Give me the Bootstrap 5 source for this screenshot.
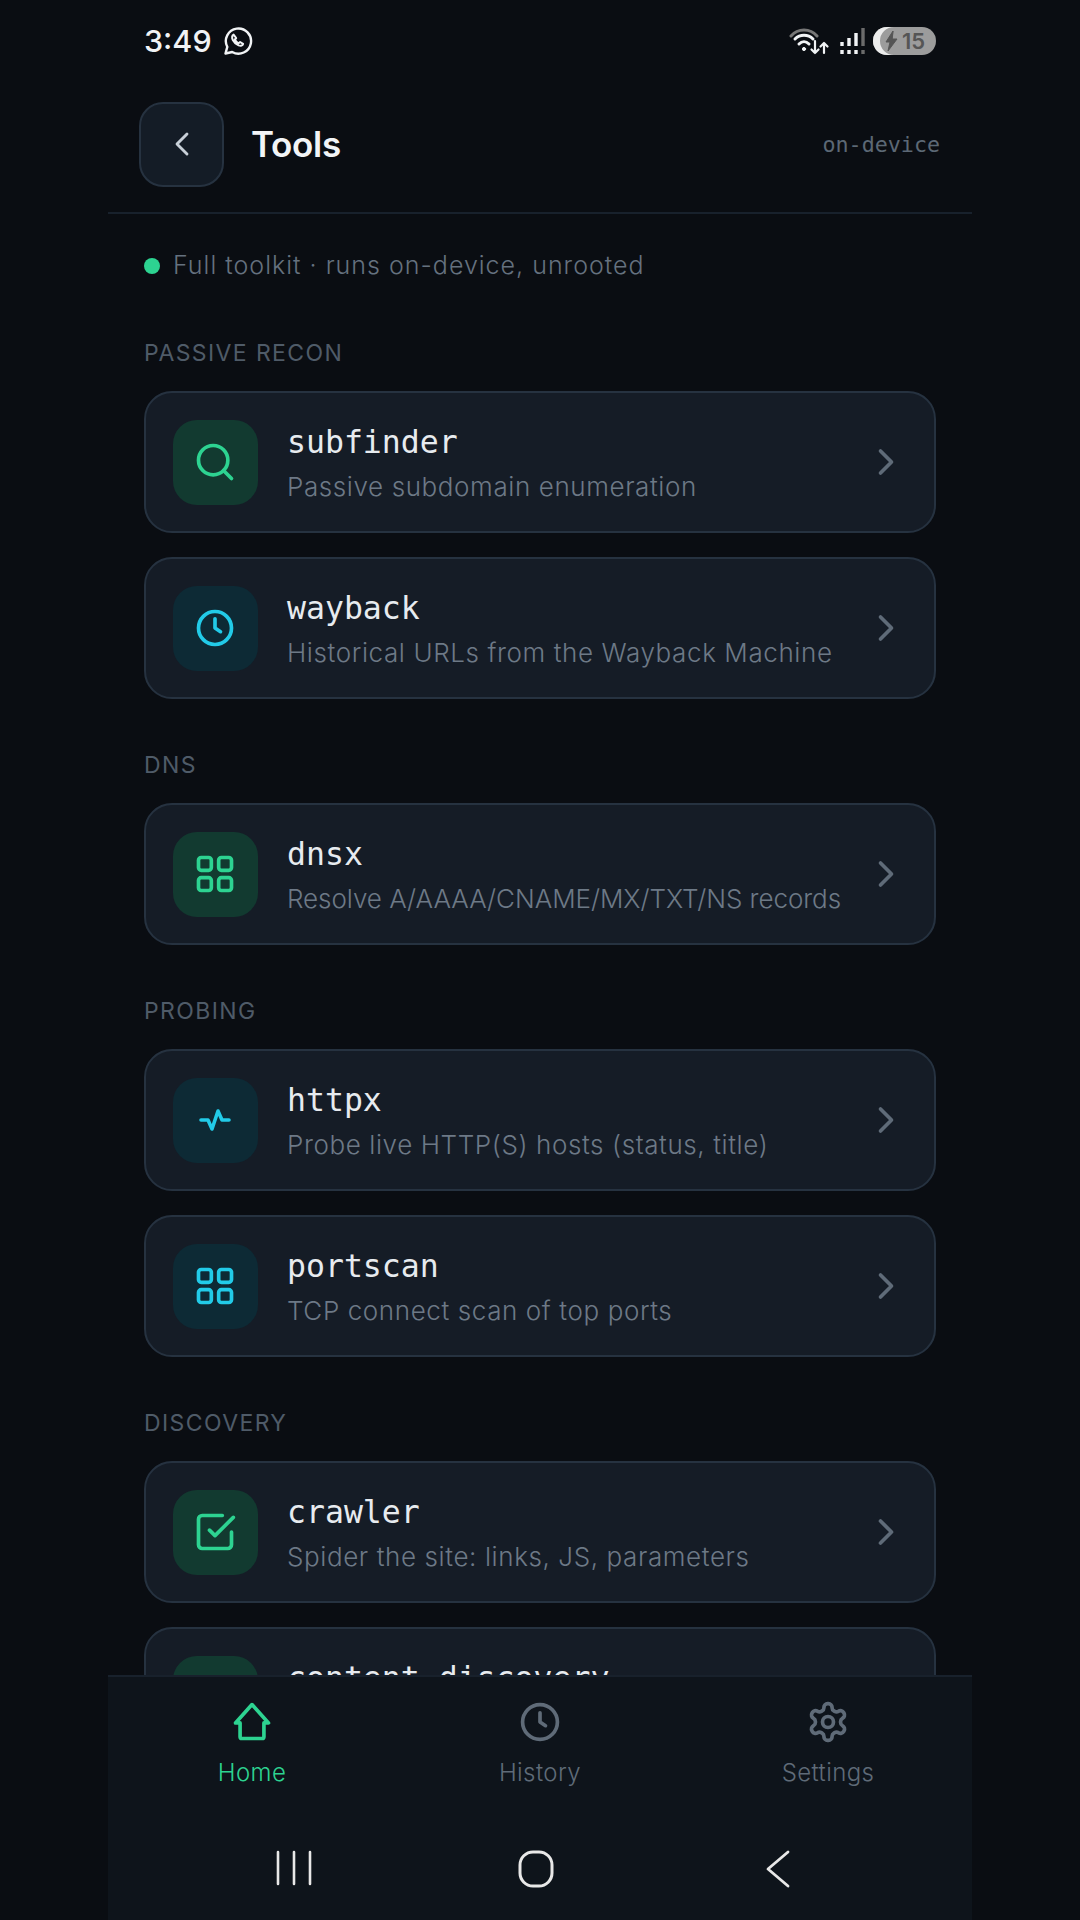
<!DOCTYPE html>
<html>

<head>
  <link href="https://cdn.jsdelivr.net/npm/bootstrap@5.3.2/dist/css/bootstrap.min.css" rel="stylesheet" type="text/css" />
  <script src="https://cdn.jsdelivr.net/npm/bootstrap@5.3.2/dist/js/bootstrap.bundle.min.js"></script>

  <style>
    html, body { height: 100%; }
    body { background: #0a0d12; font-family: "Inter", "Liberation Sans", sans-serif; overflow: hidden; }
    svg { display: block; fill: none; stroke: currentColor; stroke-linecap: round; stroke-linejoin: round; flex-shrink: 0; }

    .app-shell { width: 864px; height: 1920px; margin-left: 108px; }

    .status-row { height: 82px; padding: 0 36px; color: #f1f3f5; }
    .status-time { font-size: 30.5px; font-weight: 500; line-height: 1; width: 63px; }
    .batt-pill { width: 63px; height: 28px; border-radius: 14px; background: #9c9c9c; box-shadow: inset 7px 0 0 #ececec; color: #555; font-size: 22px; font-weight: 600; line-height: 1; padding-left: 12px; }

    .app-bar { height: 132px; padding: 20px 32px 26px 31px; border-bottom: 2px solid #18212c; }
    .back-tile { width: 85px; height: 85px; border-radius: 24px; background: #141c26; border: 2px solid #263240; color: #c8d0d8; }
    .app-title { font-size: 35px; font-weight: 600; color: #f2f4f6; margin-left: 27px; letter-spacing: -0.3px; }
    .app-tag { font-family: "DejaVu Sans Mono", "Liberation Mono", monospace; font-size: 21.7px; color: #5c6875; padding-top: 2px; }

    .scroll-zone { padding: 0 36px; overflow: hidden; min-height: 0; }
    .state-line { height: 34px; margin-top: 35px; margin-bottom: 54px; color: #65717f; font-size: 25px; font-weight: 300; letter-spacing: 1px; }
    .state-dot { width: 16px; height: 16px; border-radius: 50%; background: #2dd391; margin-right: 13px; }

    .group-head { height: 30px; line-height: 32px; margin: 0 0 24px; color: #4f5b68; font-size: 23px; font-weight: 400; letter-spacing: 1.4px; }
    .tool-group { margin-bottom: 50px; }

    .tool-tile { height: 142px; border-radius: 28px; background: #151c26; border: 2px solid #263240; padding: 0 26px 0 27px; margin-bottom: 24px; }
    .tool-group .tool-tile:last-child { margin-bottom: 0; }
    .icon-box { width: 85px; height: 85px; border-radius: 24px; margin-right: 29px; }
    .icon-box svg { margin-left: -2px; }
    .tone-green { background: #123a30; color: #2dd391; }
    .tone-cyan { background: #0d2a35; color: #22cbe8; }
    .tool-name { font-family: "DejaVu Sans Mono", "Liberation Mono", monospace; font-size: 31.5px; line-height: 44px; color: #e7ebef; }
    .tool-text { font-size: 26px; line-height: 36px; margin-top: 5px; color: #6d7986; font-weight: 300; white-space: nowrap; letter-spacing: .6px; }
    .tool-text.caps-text { letter-spacing: -.05px; }
    .tool-arrow { color: #5f6b78; }

    .tab-bar { height: 245px; background: #0e141b; border-top: 2px solid #18212c; flex-shrink: 0; }
    .tab-row { height: 135px; padding-top: 23px; }
    .tab-item { width: 288px; color: #5f6b78; font-size: 24px; font-weight: 300; line-height: 30px; letter-spacing: .4px; }
    .tab-item svg { margin-bottom: 14px; }
    .tab-item.active-tab { color: #2dd391; }
    .sys-row { height: 108px; color: #e8e8e8; padding: 38px 0 0 65px; }
    .sys-key { width: 242px; }
  </style>
</head>

<body>
  <div class="app-shell d-flex flex-column">

    <header class="flex-shrink-0">
      <div class="status-row d-flex align-items-center justify-content-between">
        <div class="d-flex align-items-center">
          <span class="status-time">3:49</span>
          <svg class="ms-3" width="30" height="30" viewBox="0 0 30 30" stroke-width="2.4">
            <path d="M2.5 27.5l1.8-6.6A12.6 12.6 0 1 1 9.2 26z" />
            <path d="M10.6 8.6c-1.6.7-2 3-.8 5.4 1.3 2.5 3.4 4.4 5.8 5.4 2.200.8 4 .2 4.500-1.500l-3-1.900-1.500 1.300c-1.500-.7-3-2.200-3.700-3.800l1.300-1.500z" stroke-width="2" />
          </svg>
        </div>
        <div class="d-flex align-items-center">
          <svg width="42" height="30" viewBox="0 0 42 30" stroke-width="3">
            <path d="M2 10C9 2 21 2 28 10" stroke="#777" />
            <path d="M6 13c5-5 13-5 18 0" />
            <path d="M10 18c3-3 7-3 10 0" />
            <circle cx="15" cy="23" r="1.600" fill="currentColor" stroke-width="1" />
            <path d="M26 15v12M22.500 23.500l3.500 3.500 3.500-3.500M35 27V17M31.500 20.500l3.500-3.500 3.500 3.500" stroke-width="2.200" />
          </svg>
          <svg class="ms-2" width="26" height="30" viewBox="0 0 26 30" stroke-width="3.400" stroke-linecap="butt">
            <path d="M3 16v4M3 24v4M10 12v8M10 24v4M17 7v13M17 24v4" stroke-linecap="butt" />
            <path d="M24 2v18M24 24v4" stroke="#6b6b6b" stroke-linecap="butt" />
          </svg>
          <div class="batt-pill d-flex align-items-center ms-2">
            <svg width="13" height="20" viewBox="0 0 13 20" stroke="none"><path d="M8 0 1 11h4l-2 9 9-12H7.500z" fill="#555" /></svg>
            <span class="ms-1">15</span>
          </div>
        </div>
      </div>

      <div class="app-bar d-flex align-items-center">
        <div class="back-tile d-flex align-items-center justify-content-center">
          <svg width="40" height="40" viewBox="0 0 24 24" stroke-width="1.700"><polyline points="15 18 9 12 15 6" /></svg>
        </div>
        <div class="app-title flex-grow-1">Tools</div>
        <div class="app-tag">on-device</div>
      </div>
    </header>

    <main class="scroll-zone flex-grow-1">
      <div class="state-line d-flex align-items-center"><span class="state-dot"></span>Full toolkit · runs on-device, unrooted</div>

      <section class="tool-group">
        <h2 class="group-head">PASSIVE RECON</h2>
        <div class="tool-tile d-flex align-items-center">
          <div class="icon-box tone-green d-flex align-items-center justify-content-center">
            <svg width="44" height="44" viewBox="0 0 24 24" stroke-width="2"><circle cx="11" cy="11" r="8" /><line x1="21" y1="21" x2="16.650" y2="16.650" /></svg>
          </div>
          <div class="flex-grow-1">
            <div class="tool-name">subfinder</div>
            <div class="tool-text">Passive subdomain enumeration</div>
          </div>
          <svg class="tool-arrow" width="44" height="44" viewBox="0 0 24 24" stroke-width="2"><polyline points="9 18 15 12 9 6" /></svg>
        </div>
        <div class="tool-tile d-flex align-items-center">
          <div class="icon-box tone-cyan d-flex align-items-center justify-content-center">
            <svg width="44" height="44" viewBox="0 0 24 24" stroke-width="2"><circle cx="12" cy="12" r="9" /><polyline points="12 7 12 12 15 14" /></svg>
          </div>
          <div class="flex-grow-1">
            <div class="tool-name">wayback</div>
            <div class="tool-text">Historical URLs from the Wayback Machine</div>
          </div>
          <svg class="tool-arrow" width="44" height="44" viewBox="0 0 24 24" stroke-width="2"><polyline points="9 18 15 12 9 6" /></svg>
        </div>
      </section>

      <section class="tool-group">
        <h2 class="group-head">DNS</h2>
        <div class="tool-tile d-flex align-items-center">
          <div class="icon-box tone-green d-flex align-items-center justify-content-center">
            <svg width="44" height="44" viewBox="0 0 24 24" stroke-width="2"><rect x="3" y="3" width="7" height="7" rx="1.500" /><rect x="14" y="3" width="7" height="7" rx="1.500" /><rect x="3" y="14" width="7" height="7" rx="1.500" /><rect x="14" y="14" width="7" height="7" rx="1.500" /></svg>
          </div>
          <div class="flex-grow-1">
            <div class="tool-name">dnsx</div>
            <div class="tool-text caps-text">Resolve A/AAAA/CNAME/MX/TXT/NS records</div>
          </div>
          <svg class="tool-arrow" width="44" height="44" viewBox="0 0 24 24" stroke-width="2"><polyline points="9 18 15 12 9 6" /></svg>
        </div>
      </section>

      <section class="tool-group">
        <h2 class="group-head">PROBING</h2>
        <div class="tool-tile d-flex align-items-center">
          <div class="icon-box tone-cyan d-flex align-items-center justify-content-center">
            <svg width="44" height="44" viewBox="0 0 44 44" stroke-width="3.600"><polyline points="8 22 15 22 19 31 25 13 29 22 36 22" /></svg>
          </div>
          <div class="flex-grow-1">
            <div class="tool-name">httpx</div>
            <div class="tool-text">Probe live HTTP(S) hosts (status, title)</div>
          </div>
          <svg class="tool-arrow" width="44" height="44" viewBox="0 0 24 24" stroke-width="2"><polyline points="9 18 15 12 9 6" /></svg>
        </div>
        <div class="tool-tile d-flex align-items-center">
          <div class="icon-box tone-cyan d-flex align-items-center justify-content-center">
            <svg width="44" height="44" viewBox="0 0 24 24" stroke-width="2"><rect x="3" y="3" width="7" height="7" rx="1.500" /><rect x="14" y="3" width="7" height="7" rx="1.500" /><rect x="3" y="14" width="7" height="7" rx="1.500" /><rect x="14" y="14" width="7" height="7" rx="1.500" /></svg>
          </div>
          <div class="flex-grow-1">
            <div class="tool-name">portscan</div>
            <div class="tool-text">TCP connect scan of top ports</div>
          </div>
          <svg class="tool-arrow" width="44" height="44" viewBox="0 0 24 24" stroke-width="2"><polyline points="9 18 15 12 9 6" /></svg>
        </div>
      </section>

      <section class="tool-group">
        <h2 class="group-head">DISCOVERY</h2>
        <div class="tool-tile d-flex align-items-center">
          <div class="icon-box tone-green d-flex align-items-center justify-content-center">
            <svg width="44" height="44" viewBox="0 0 24 24" stroke-width="2"><polyline points="9 11 12 14 22 4" /><path d="M21 12v7a2 2 0 0 1-2 2H5a2 2 0 0 1-2-2V5a2 2 0 0 1 2-2h11" /></svg>
          </div>
          <div class="flex-grow-1">
            <div class="tool-name">crawler</div>
            <div class="tool-text">Spider the site: links, JS, parameters</div>
          </div>
          <svg class="tool-arrow" width="44" height="44" viewBox="0 0 24 24" stroke-width="2"><polyline points="9 18 15 12 9 6" /></svg>
        </div>
        <div class="tool-tile d-flex align-items-center">
          <div class="icon-box tone-green d-flex align-items-center justify-content-center"></div>
          <div class="flex-grow-1">
            <div class="tool-name">content-discovery</div>
            <div class="tool-text">&nbsp;</div>
          </div>
        </div>
      </section>
    </main>

    <nav class="tab-bar">
      <div class="tab-row d-flex">
        <div class="tab-item active-tab d-flex flex-column align-items-center">
          <svg width="44" height="44" viewBox="0 0 24 24" stroke-width="2"><path d="M12 2.500 21 12.500H18.500V20a1 1 0 0 1-1 1H6.500a1 1 0 0 1-1-1V12.500H3z" /></svg>
          Home
        </div>
        <div class="tab-item d-flex flex-column align-items-center">
          <svg width="44" height="44" viewBox="0 0 24 24" stroke-width="2"><circle cx="12" cy="12" r="9.500" /><polyline points="12 7 12 12 15 14" /></svg>
          History
        </div>
        <div class="tab-item d-flex flex-column align-items-center">
          <svg width="44" height="44" viewBox="0 0 24 24" stroke-width="2"><path d="M12.220 2h-.44a2 2 0 0 0-2 2v.18a2 2 0 0 1-1 1.730l-.43.25a2 2 0 0 1-2 0l-.15-.08a2 2 0 0 0-2.730.73l-.22.38a2 2 0 0 0 .73 2.730l.15.1a2 2 0 0 1 1 1.720v.51a2 2 0 0 1-1 1.740l-.15.09a2 2 0 0 0-.73 2.730l.22.38a2 2 0 0 0 2.730.73l.15-.08a2 2 0 0 1 2 0l.43.25a2 2 0 0 1 1 1.730V20a2 2 0 0 0 2 2h.44a2 2 0 0 0 2-2v-.18a2 2 0 0 1 1-1.730l.43-.25a2 2 0 0 1 2 0l.15.08a2 2 0 0 0 2.730-.73l.22-.39a2 2 0 0 0-.73-2.730l-.15-.08a2 2 0 0 1-1-1.740v-.5a2 2 0 0 1 1-1.740l.15-.09a2 2 0 0 0 .73-2.730l-.22-.38a2 2 0 0 0-2.730-.73l-.15.08a2 2 0 0 1-2 0l-.43-.25a2 2 0 0 1-1-1.730V4a2 2 0 0 0-2-2z" /><circle cx="12" cy="12" r="3" /></svg>
          Settings
        </div>
      </div>
      <div class="sys-row d-flex">
        <div class="sys-key d-flex justify-content-center">
          <svg width="38" height="36" viewBox="0 0 38 36" stroke-width="2.600"><path d="M3 2v32M19 2v32M35 2v32" /></svg>
        </div>
        <div class="sys-key d-flex justify-content-center">
          <svg width="38" height="38" viewBox="0 0 38 38" stroke-width="3"><rect x="3" y="2" width="32" height="34" rx="13" /></svg>
        </div>
        <div class="sys-key d-flex justify-content-center">
          <svg width="26" height="38" viewBox="0 0 26 38" stroke-width="2.800"><polyline points="23 2 3 19 23 36" /></svg>
        </div>
      </div>
    </nav>
  </div>
</body>

</html>
